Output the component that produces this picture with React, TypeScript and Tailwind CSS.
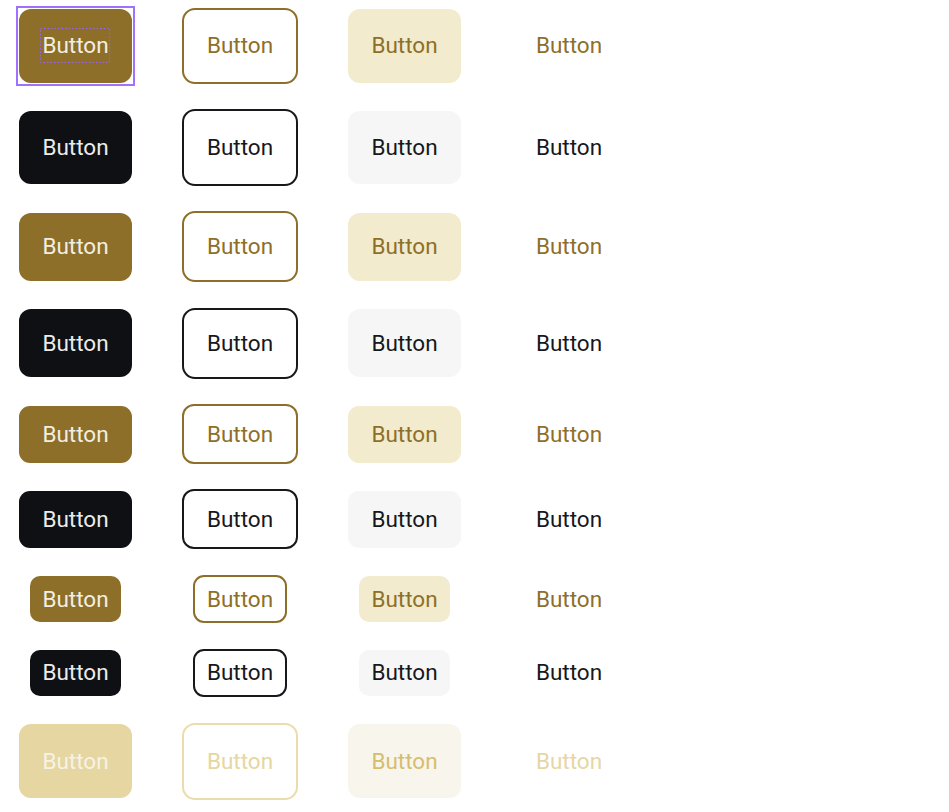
import React from "react";

type Tone = "gold" | "black" | "disabled";

type Size = {
  row: string;
  fill: string;
  outline: string;
};

const LG: Size = {
  row: "h-[73.5px]",
  fill: "w-[113px] h-[73.5px] rounded-[12px]",
  outline: "w-[116px] h-[76.5px] rounded-[13px]",
};
const LG2: Size = {
  row: "h-[74px]",
  fill: "w-[113px] h-[74px] rounded-[12px]",
  outline: "w-[116px] h-[77px] rounded-[13px]",
};
const MD: Size = {
  row: "h-[68px]",
  fill: "w-[113px] h-[68px] rounded-[12px]",
  outline: "w-[116px] h-[71px] rounded-[13px]",
};
const SM: Size = {
  row: "h-[57px]",
  fill: "w-[113px] h-[57px] rounded-[11px]",
  outline: "w-[116px] h-[60px] rounded-[12px]",
};
const XS: Size = {
  row: "h-[45.5px]",
  fill: "w-[91px] h-[45.5px] rounded-[10px]",
  outline: "w-[94px] h-[48.5px] rounded-[11px]",
};

const tones: Record<
  Tone,
  { filled: string; outlined: string; tonal: string; text: string }
> = {
  gold: {
    filled: "bg-[#8e6f29] text-[#f3eee2]",
    outlined: "border-[2.5px] border-[#8e6f29] text-[#8e6f29] bg-white",
    tonal: "bg-[#f2ebcd] text-[#8e6f29]",
    text: "text-[#8e6f29]",
  },
  black: {
    filled: "bg-[#0f1014] text-[#ebebeb]",
    outlined: "border-[2.5px] border-[#17181c] text-[#17181c] bg-white",
    tonal: "bg-[#f6f6f6] text-[#17181c]",
    text: "text-[#17181c]",
  },
  disabled: {
    filled: "bg-[#e6d6a1] text-[#f7f2e6]",
    outlined: "border-[2.5px] border-[#ebdcab] text-[#e6d6a1] bg-white",
    tonal: "bg-[#f8f5ec] text-[#d6bd6e]",
    text: "text-[#e6d6a3]",
  },
};

const rows: { size: Size; tone: Tone; focused?: boolean }[] = [
  { size: LG, tone: "gold", focused: true },
  { size: LG, tone: "black" },
  { size: MD, tone: "gold" },
  { size: MD, tone: "black" },
  { size: SM, tone: "gold" },
  { size: SM, tone: "black" },
  { size: XS, tone: "gold" },
  { size: XS, tone: "black" },
  { size: LG2, tone: "disabled" },
];

const label = "text-[22.5px] leading-[33px] font-normal";

function Cell({ children }: { children: React.ReactNode }) {
  return (
    <div className="w-[113px] h-full flex items-center justify-center shrink-0">
      {children}
    </div>
  );
}

function FocusLabel() {
  return (
    <span className={`${label} relative px-[2px] py-[1px]`}>
      Button
      <svg
        className="absolute inset-0 w-full h-full pointer-events-none overflow-visible"
        preserveAspectRatio="none"
      >
        <rect
          x="0.5"
          y="0.5"
          width="calc(100% - 1px)"
          height="calc(100% - 1px)"
          fill="none"
          stroke="#9a63ff"
          strokeWidth="1"
          strokeDasharray="1.5 2"
        />
      </svg>
    </span>
  );
}

export default function App() {
  return (
    <div
      className="w-[949px] h-[812px] bg-white pt-[9px] pl-[19px] flex flex-col gap-[28.4px] overflow-hidden"
      style={{ fontFamily: "Roboto, 'Noto Sans', sans-serif" }}
    >
      {rows.map((r, i) => {
        const t = tones[r.tone];
        const filledBtn = (
          <div
            className={`${r.size.fill} ${t.filled} flex items-center justify-center shrink-0`}
          >
            {r.focused ? <FocusLabel /> : <span className={label}>Button</span>}
          </div>
        );
        return (
          <div
            key={i}
            className={`${r.size.row} shrink-0 flex gap-[51.5px] items-center`}
          >
            <Cell>
              {r.focused ? (
                <div className="relative flex items-center justify-center">
                  <div className="absolute -inset-[3px] border-2 border-[#a071ff] pointer-events-none" />
                  {filledBtn}
                </div>
              ) : (
                filledBtn
              )}
            </Cell>
            <Cell>
              <div
                className={`${r.size.outline} ${t.outlined} flex items-center justify-center shrink-0`}
              >
                <span className={label}>Button</span>
              </div>
            </Cell>
            <Cell>
              <div
                className={`${r.size.fill} ${t.tonal} flex items-center justify-center shrink-0`}
              >
                <span className={label}>Button</span>
              </div>
            </Cell>
            <Cell>
              <div
                className={`${r.size.fill} ${t.text} flex items-center justify-center shrink-0`}
              >
                <span className={label}>Button</span>
              </div>
            </Cell>
          </div>
        );
      })}
    </div>
  );
}
